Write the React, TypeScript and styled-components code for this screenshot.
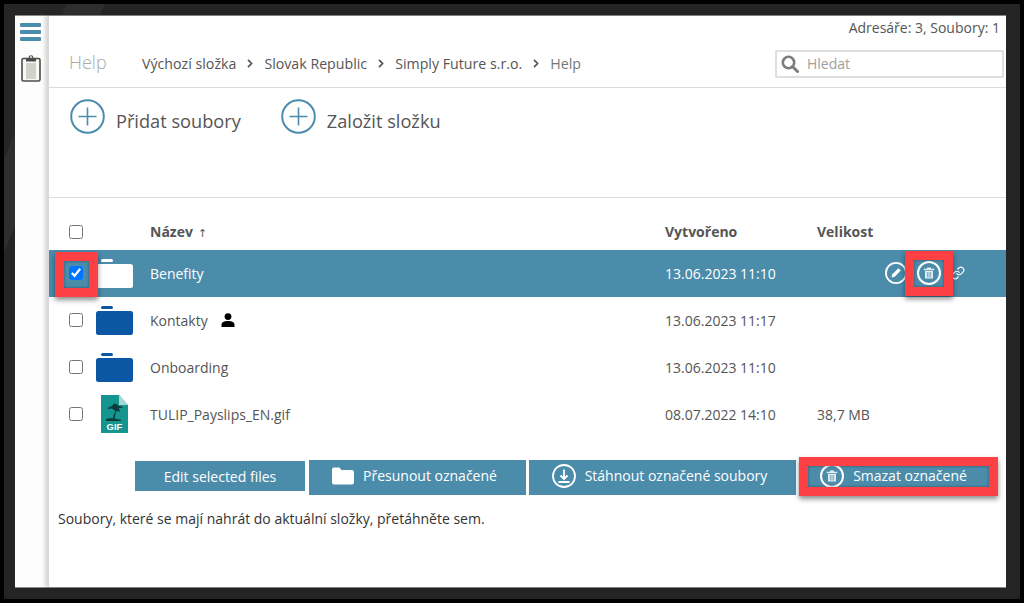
import React from "react";
import styled, { createGlobalStyle } from "styled-components";
import { Link as LinkIcon } from "lucide-react";

const GlobalStyle = createGlobalStyle`
    html, body {
        margin: 0;
        padding: 0;
        overflow: hidden;
        background: #000;
    }
    * {
        box-sizing: border-box;
    }
`;

const Frame = styled.div`
    width: 1024px;
    height: 603px;
    padding: 11px 14px 11px 11px;
    border: 4px solid #000;
    background: linear-gradient(112deg, #262626 0 5%, #2e2e2e 5% 8%, #242424 8% 100%);
    font-family: "Open Sans", "Noto Sans", sans-serif;
    color: #555;
`;

const Window = styled.div`
    display: flex;
    width: 991px;
    height: 573px;
    border-top: 1px solid #8a8a8a;
    border-bottom: 1px solid #8a8a8a;
    background: #fff;
`;

const Sidebar = styled.aside`
    display: flex;
    flex-direction: column;
    align-items: center;
    gap: 14px;
    width: 33px;
    padding: 7px 2px 0 0;
    background: #fdfdfd;
`;

const Burger = styled.div`
    display: flex;
    flex-direction: column;
    gap: 3px;
    width: 21px;
`;

const BurgerBar = styled.span`
    height: 4px;
    border-radius: 1px;
    background: #4a8cab;
`;

const Main = styled.main`
    position: relative;
    display: flex;
    flex: 1;
    flex-direction: column;
    min-width: 0;
    border-left: 1px solid #d8d8d8;
    box-shadow: -3px 0 4px rgba(0, 0, 0, 0.16);
    background: #fff;
`;

const Counts = styled.div`
    height: 24px;
    padding: 2px 6px 0 0;
    font-size: 14px;
    line-height: 20px;
    text-align: right;
    color: #555;
`;

const TitleBar = styled.header`
    display: flex;
    align-items: center;
    height: 48px;
    padding: 0 2px 0 20px;
    border-bottom: 1px solid #dcdcdc;
`;

const Title = styled.h1`
    width: 73px;
    margin: 0 0 4px;
    font-size: 18px;
    font-weight: 300;
    color: #a9a9a9;
`;

const Crumbs = styled.nav`
    display: flex;
    flex: 1;
    align-items: center;
    gap: 11px;
    font-size: 14.2px;
    color: #555;
`;

const Crumb = styled.span<{ $last?: boolean }>`
    color: ${(p) => (p.$last ? "#777" : "#555")};
`;

const Search = styled.div`
    display: flex;
    align-items: center;
    gap: 8px;
    width: 229px;
    height: 28px;
    padding-left: 4px;
    border: 2px solid #dfdfdf;
    font-size: 14px;
    color: #a0a0a0;
`;

const Actions = styled.section`
    display: flex;
    gap: 40px;
    height: 110px;
    padding: 11px 0 0 21px;
    border-bottom: 1px solid #dcdcdc;
`;

const AddAction = styled.div`
    display: flex;
    align-items: center;
    gap: 11px;
    height: 35px;
    font-size: 18.2px;
    color: #555;
`;

const AddLabel = styled.span`
    padding-top: 8px;
`;

const Row = styled.div<{ $selected?: boolean; $header?: boolean }>`
    position: relative;
    display: grid;
    grid-template-columns: 47px 54px 515px 152px 1fr;
    align-items: center;
    height: ${(p) => (p.$header ? "52px" : "47px")};
    padding: ${(p) => (p.$header ? "15px 0 0" : "0 0 1px")};
    font-size: 14px;
    font-weight: ${(p) => (p.$header ? 700 : 400)};
    background: ${(p) => (p.$selected ? "#4b8cab" : "transparent")};
    color: ${(p) => (p.$selected ? "#fff" : "#555")};
`;

const CheckCell = styled.div`
    display: flex;
    padding-left: 20px;
`;

const Check = styled.input`
    width: 14px;
    height: 14px;
    margin: 0;
`;

const IconCell = styled.div<{ $inset?: boolean }>`
    display: flex;
    height: 38px;
    align-items: center;
    padding-left: ${(p) => (p.$inset ? "4px" : "0")};
`;

const NameCell = styled.div`
    display: flex;
    align-items: center;
    gap: 13px;
`;

const SortArrow = styled.span`
    margin-left: 5px;
    font-family: "DejaVu Sans", sans-serif;
    font-size: 11px;
    font-weight: 400;
`;

const RowTools = styled.div`
    display: flex;
    align-items: center;
    gap: 10px;
    padding-left: 68px;
`;

const Highlight = styled.div<{ $left: number; $top: number; $width: number; $height: number }>`
    position: absolute;
    left: ${(p) => p.$left}px;
    top: ${(p) => p.$top}px;
    width: ${(p) => p.$width}px;
    height: ${(p) => p.$height}px;
    border: 9px solid #fd4044;
    box-shadow: 0 3px 5px rgba(0, 0, 0, 0.45), inset 0 0 3px rgba(0, 0, 0, 0.4);
`;

const ButtonBar = styled.div`
    position: relative;
    display: flex;
    align-items: flex-start;
    gap: 3px;
    height: 36px;
    margin-top: 22px;
    padding-left: 86px;
`;

const ActionButton = styled.div<{ $width: number; $short?: boolean; $shift?: number }>`
    display: flex;
    align-items: center;
    justify-content: center;
    gap: 9px;
    width: ${(p) => p.$width}px;
    height: ${(p) => (p.$short ? "30px" : "35px")};
    margin: ${(p) => (p.$short ? "1px 1px 0 0" : "0")};
    padding: ${(p) => (p.$short ? "0" : `0 ${p.$shift ?? 0}px 4px 0`)};
    font-size: 14px;
    background: #4b8cab;
    color: #fff;
`;

const DropHint = styled.p`
    margin: 14px 0 0 9px;
    font-size: 14px;
    line-height: 18px;
    color: #333;
`;

const Clipboard = () => (
    <svg width="20" height="27" viewBox="0 0 20 27">
        <rect x="1" y="3.5" width="18" height="22.5" rx="1.5" fill="#faf8f0" stroke="#4b4b4b" strokeWidth="1.6" />
        <rect x="5" y="3" width="10" height="3.5" fill="#4b4b4b" />
        <circle cx="10" cy="2.5" r="1.8" fill="none" stroke="#4b4b4b" strokeWidth="1.1" />
        {[9, 11, 13, 15, 17, 19, 21, 23].map((y) => (
            <line key={y} x1="5" x2="15" y1={y} y2={y} stroke="#8a8a8a" strokeWidth="0.7" />
        ))}
    </svg>
);

const Magnifier = () => (
    <svg width="18" height="18" viewBox="0 0 18 18">
        <circle cx="7.5" cy="7.5" r="5.7" fill="none" stroke="#7d7d7d" strokeWidth="2.6" />
        <line x1="11.5" y1="11.5" x2="16.5" y2="16.5" stroke="#7d7d7d" strokeWidth="3" strokeLinecap="round" />
    </svg>
);

const Chevron = () => (
    <svg width="6" height="9" viewBox="0 0 6 9">
        <path d="M1 .8l3.6 3.7L1 8.2" fill="none" stroke="#555" strokeWidth="1.7" />
    </svg>
);

const PlusCircle = () => (
    <svg width="35" height="35" viewBox="0 0 35 35">
        <circle cx="17.5" cy="17.5" r="16.3" fill="none" stroke="#4a8cab" strokeWidth="2" />
        <path d="M17.5 8.5v18M8.5 17.5h18" stroke="#4a8cab" strokeWidth="1.6" />
    </svg>
);

const Folder = ({ color }: { color: string }) => (
    <svg width="37" height="29" viewBox="0 0 37 29">
        <rect x="5" y="0" width="12" height="3" rx="1.5" fill={color} />
        <rect x="0" y="5" width="37" height="24" rx="2.5" fill={color} />
    </svg>
);

const GifFile = () => (
    <svg width="29" height="38" viewBox="0 0 29 38">
        <path d="M1 0h18l9 10v28H1z" fill="#14958f" />
        <path d="M19 0l9 10h-9z" fill="#a8d8d4" />
        <path d="M6 24c3-1 8-1 15 1v1H6z" fill="#0d3b3a" />
        <path d="M13 25c0-3 .6-6 2-8l1 .4c-1 2.4-1.3 5-1.2 7.6z" fill="#0d3b3a" />
        <path d="M15.5 17c-1-3-4-4.5-8-3 1-2 3-3 5-2.7C12 9.5 14 8.5 16 9c1.5.4 2.3 1.3 2.5 2.3 2-.6 3.8.2 4.5 2-2-.8-3.500-.6-4.500 0 1 1 1.300 2.500 1 4-1-1.300-2.200-1.800-4-.3z" fill="#0d3b3a" />
        <text x="14.5" y="35" textAnchor="middle" fontFamily="'Liberation Sans', sans-serif" fontWeight="700" fontSize="9.5" fill="#fff">
            GIF
        </text>
    </svg>
);

const Person = () => (
    <svg width="14" height="14" viewBox="0 0 14 14">
        <circle cx="7" cy="3.6" r="3.4" fill="#000" />
        <path d="M0.5 14v-2.2C0.5 9.2 3 8 7 8s6.5 1.2 6.5 3.8V14z" fill="#000" />
    </svg>
);

const TrashGlyph = ({ size }: { size: number }) => (
    <svg width={size} height={size} viewBox="0 0 24 24">
        <circle cx="12" cy="12" r="11" fill="none" stroke="#fff" strokeWidth="2" />
        <path d="M10 6.5h4v1.2h3.2v1.5H6.8V7.7H10zM8 10h8v7.5H8z" fill="#e4eef3" />
        <path d="M10.3 11v5.5M12 11v5.5M13.7 11v5.5" stroke="#4b8cab" strokeWidth="0.7" />
    </svg>
);

const PencilCircle = () => (
    <svg width="22" height="22" viewBox="0 0 24 24">
        <circle cx="12" cy="12" r="11" fill="none" stroke="#fff" strokeWidth="2" />
        <path d="M7 17l1-3.6 6.6-6.6 2.6 2.6-6.6 6.6z" fill="#fff" />
    </svg>
);

const DownloadCircle = () => (
    <svg width="24" height="24" viewBox="0 0 24 24">
        <circle cx="12" cy="12" r="11" fill="none" stroke="#fff" strokeWidth="1.8" />
        <path d="M12 5.5v9M8.5 11.5l3.5 3.5 3.5-3.5M6.5 18h11" fill="none" stroke="#fff" strokeWidth="1.8" />
    </svg>
);

const ButtonFolder = () => (
    <svg width="22" height="18" viewBox="0 0 22 18">
        <path d="M0 2.5A2 2 0 0 1 2 .5h5.5l2 2.5H20a2 2 0 0 1 2 2v10.5a2 2 0 0 1-2 2H2a2 2 0 0 1-2-2z" fill="#fff" />
    </svg>
);

const files = [
    { name: "Kontakty", date: "13.06.2023 11:17", size: "", kind: "folder", shared: true },
    { name: "Onboarding", date: "13.06.2023 11:10", size: "", kind: "folder", shared: false },
    { name: "TULIP_Payslips_EN.gif", date: "08.07.2022 14:10", size: "38,7 MB", kind: "gif", shared: false },
];

const App = () => {
    return (
        <Frame>
            <GlobalStyle />
            <Window>
                <Sidebar>
                    <Burger>
                        <BurgerBar />
                        <BurgerBar />
                        <BurgerBar />
                    </Burger>
                    <Clipboard />
                </Sidebar>
                <Main>
                    <Counts>Adresáře: 3, Soubory: 1</Counts>
                    <TitleBar>
                        <Title>Help</Title>
                        <Crumbs>
                            <Crumb>Výchozí složka</Crumb>
                            <Chevron />
                            <Crumb>Slovak Republic</Crumb>
                            <Chevron />
                            <Crumb>Simply Future s.r.o.</Crumb>
                            <Chevron />
                            <Crumb $last>Help</Crumb>
                        </Crumbs>
                        <Search>
                            <Magnifier />
                            Hledat
                        </Search>
                    </TitleBar>
                    <Actions>
                        <AddAction>
                            <PlusCircle />
                            <AddLabel>Přidat soubory</AddLabel>
                        </AddAction>
                        <AddAction>
                            <PlusCircle />
                            <AddLabel>Založit složku</AddLabel>
                        </AddAction>
                    </Actions>
                    <Row $header>
                        <CheckCell>
                            <Check type="checkbox" readOnly />
                        </CheckCell>
                        <div />
                        <div>
                            Název<SortArrow>↑</SortArrow>
                        </div>
                        <div>Vytvořeno</div>
                        <div>Velikost</div>
                    </Row>
                    <Row $selected>
                        <CheckCell>
                            <Check type="checkbox" checked readOnly />
                        </CheckCell>
                        <IconCell>
                            <Folder color="#fff" />
                        </IconCell>
                        <NameCell>Benefity</NameCell>
                        <div>13.06.2023 11:10</div>
                        <RowTools>
                            <PencilCircle />
                            <TrashGlyph size={24} />
                            <LinkIcon size={14} color="#fff" />
                        </RowTools>
                        <Highlight $left={6} $top={2} $width={43} $height={45} />
                        <Highlight $left={856} $top={1} $width={48} $height={45} />
                    </Row>
                    {files.map((file) => (
                        <Row key={file.name}>
                            <CheckCell>
                                <Check type="checkbox" readOnly />
                            </CheckCell>
                            <IconCell $inset={file.kind === "gif"}>
                                {file.kind === "gif" ? <GifFile /> : <Folder color="#0b57a4" />}
                            </IconCell>
                            <NameCell>
                                {file.name}
                                {file.shared && <Person />}
                            </NameCell>
                            <div>{file.date}</div>
                            <div>{file.size}</div>
                        </Row>
                    ))}
                    <ButtonBar>
                        <ActionButton $width={170} $short>
                            Edit selected files
                        </ActionButton>
                        <ActionButton $width={217} $shift={6}>
                            <ButtonFolder />
                            Přesunout označené
                        </ActionButton>
                        <ActionButton $width={267} $shift={6}>
                            <DownloadCircle />
                            Stáhnout označené soubory
                        </ActionButton>
                        <ActionButton $width={199} $shift={10}>
                            <TrashGlyph size={24} />
                            Smazat označené
                        </ActionButton>
                        <Highlight $left={750} $top={-3} $width={199} $height={39} />
                    </ButtonBar>
                    <DropHint>Soubory, které se mají nahrát do aktuální složky, přetáhněte sem.</DropHint>
                </Main>
            </Window>
        </Frame>
    );
};

export default App;
